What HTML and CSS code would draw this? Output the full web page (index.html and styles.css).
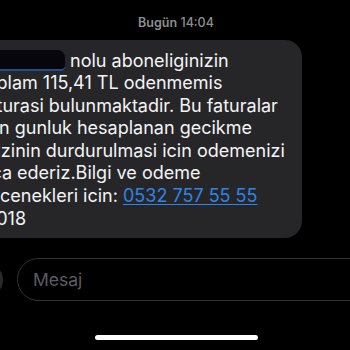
FILE: index.html
```html
<!DOCTYPE html>
<html lang="tr">
<head>
    <meta charset="UTF-8">
    <meta name="viewport" content="width=device-width, initial-scale=1.0">
    <title>Mesajlar</title>
    <link rel="stylesheet" href="styles.css">
</head>
<body>
    <div class="screen">
        <p class="timestamp"><strong>Bugün</strong> 14:04</p>
        <div class="thread">
            <div class="bubble">
                <span class="redacted">00000</span> nolu aboneliginizin<br>
                toplam 115,41 TL odenmemis<br>
                faturasi bulunmaktadir. Bu faturalar<br>
                icin gunluk hesaplanan gecikme<br>
                faizinin durdurulmasi icin odemenizi<br>
                rica ederiz.Bilgi ve odeme<br>
                secenekleri icin: <a href="#" class="phone">0532 757 55 55</a><br>
                M018
            </div>
        </div>
        <div class="compose">
            <div class="apps-button"></div>
            <div class="message-field">Mesaj</div>
        </div>
        <div class="home-indicator"></div>
    </div>
</body>
</html>
```

FILE: styles.css
```css
html, body {
    margin: 0;
    padding: 0;
    background-color: #000;
}
body {
    width: 350px;
    height: 350px;
    overflow: hidden;
    font-family: 'Inter', 'Liberation Sans', sans-serif;
}
.screen {
    display: flex;
    flex-direction: column;
    width: 350px;
}
.timestamp {
    margin: 0;
    padding-top: 15px;
    text-align: center;
    font-size: 12.5px;
    line-height: 16px;
    color: #8e8e93;
    font-weight: 500;
    padding-left: 2px;
}
.timestamp strong {
    font-weight: 600;
}
.thread {
    display: flex;
    margin-top: 9px;
}
.bubble {
    flex: none;
    width: 322px;
    margin-left: -32px;
    padding: 9.5px 0 8px 12px;
    background-color: #262628;
    border-radius: 17px;
    color: #f4f4f6;
    font-size: 18px;
    line-height: 22.6px;
    white-space: nowrap;
}
.redacted {
    display: inline-block;
    width: 85px;
    height: 21px;
    overflow: hidden;
    vertical-align: -4px;
    color: transparent;
    background-color: #06060c;
    border-radius: 0 8px 4px 0;
    box-shadow: inset 0 -2px 0 #1f4f8a;
}
.phone {
    color: #3183e6;
    text-decoration: underline;
    text-underline-offset: 2px;
}
.compose {
    display: flex;
    align-items: center;
    margin-top: 20px;
    height: 43px;
}
.apps-button {
    flex: none;
    width: 34px;
    height: 34px;
    margin-left: -31px;
    border-radius: 50%;
    background-color: #2a2a2d;
}
.message-field {
    flex: none;
    box-sizing: border-box;
    width: 360px;
    height: 43px;
    margin-left: 14px;
    padding-left: 15px;
    border: 1px solid #333336;
    border-radius: 22px;
    display: flex;
    align-items: center;
    font-size: 17.5px;
    color: #5c5c60;
}
.home-indicator {
    width: 163px;
    height: 5px;
    margin: 34px 0 0 95px;
    background-color: #fff;
    border-radius: 3px;
}
```
